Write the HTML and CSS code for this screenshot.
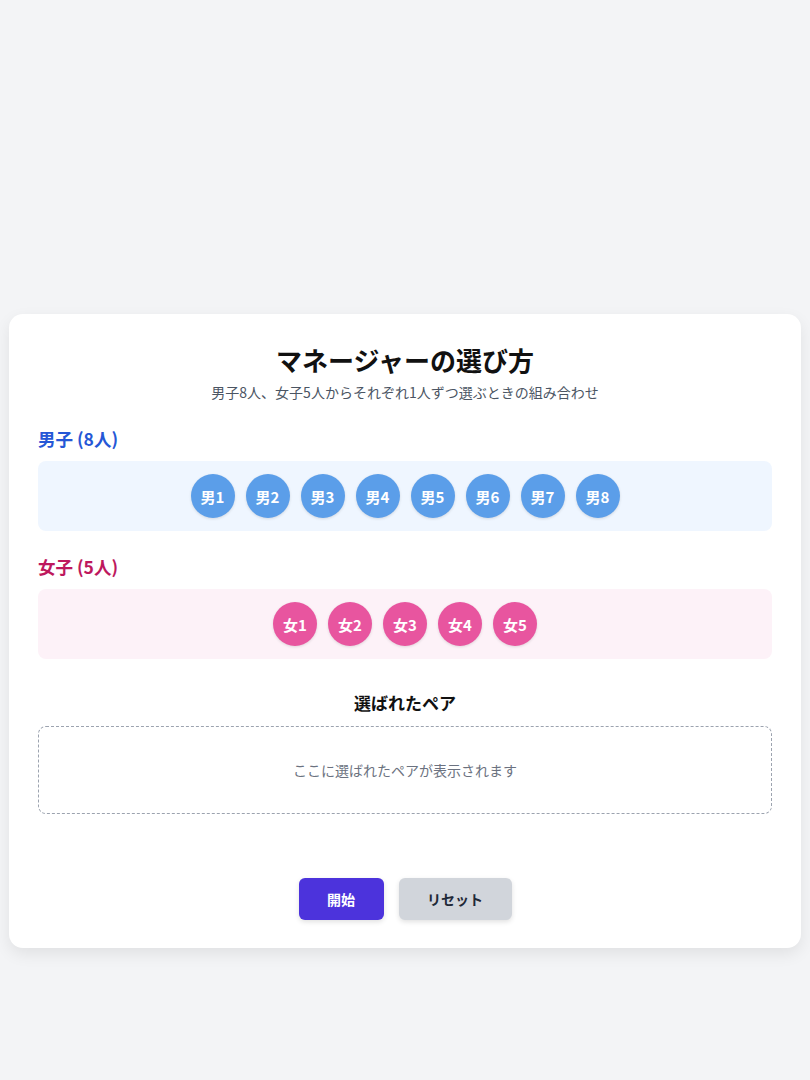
FILE: index.html
```html
<!DOCTYPE html>
<html lang="ja">
<head>
    <meta charset="UTF-8">
    <meta name="viewport" content="width=device-width, initial-scale=1.0">
    <title>マネージャーの選び方</title>
    <link rel="stylesheet" href="styles.css">
</head>
<body>
    <main class="card">
        <h1 class="title">マネージャーの選び方</h1>
        <p class="subtitle">男子8人、女子5人からそれぞれ1人ずつ選ぶときの組み合わせ</p>

        <section class="group">
            <h2 class="group-label boys">男子 (8人)</h2>
            <div class="pool boys-pool">
                <span class="person boy">男1</span>
                <span class="person boy">男2</span>
                <span class="person boy">男3</span>
                <span class="person boy">男4</span>
                <span class="person boy">男5</span>
                <span class="person boy">男6</span>
                <span class="person boy">男7</span>
                <span class="person boy">男8</span>
            </div>
        </section>

        <section class="group">
            <h2 class="group-label girls">女子 (5人)</h2>
            <div class="pool girls-pool">
                <span class="person girl">女1</span>
                <span class="person girl">女2</span>
                <span class="person girl">女3</span>
                <span class="person girl">女4</span>
                <span class="person girl">女5</span>
            </div>
        </section>

        <section class="result">
            <h3 class="result-title">選ばれたペア</h3>
            <div class="result-box">
                <span class="placeholder">ここに選ばれたペアが表示されます</span>
            </div>
        </section>

        <div class="actions">
            <button class="btn btn-start" type="button">開始</button>
            <button class="btn btn-reset" type="button">リセット</button>
        </div>
    </main>
</body>
</html>
```

FILE: styles.css
```css
body {
    font-family: "Noto Sans CJK JP", "Noto Sans", sans-serif;
    background-color: #f3f4f6;
    margin: 0;
    padding: 314px 9px 132px;
    color: #111827;
}

.card {
    background-color: #fff;
    border-radius: 14px;
    box-shadow: 0 6px 16px rgba(0, 0, 0, 0.08);
    padding: 26px 29px 28px;
}

.title {
    margin: 0;
    font-size: 26px;
    line-height: 40px;
    font-weight: 700;
    text-align: center;
    color: #111;
}

.subtitle {
    margin: 2px 0 0;
    font-size: 14px;
    line-height: 20px;
    color: #4b5563;
    text-align: center;
}

.group {
    margin-top: 25px;
}

.group + .group {
    margin-top: 24px;
}

.group-label {
    margin: 0 0 10px;
    font-size: 17.5px;
    line-height: 24px;
    font-weight: 600;
}

.group-label.boys {
    color: #2557d6;
}

.group-label.girls {
    color: #be185d;
}

.pool {
    display: flex;
    justify-content: center;
    align-items: center;
    gap: 11px;
    height: 70px;
    border-radius: 8px;
}

.boys-pool {
    background-color: #eff6ff;
}

.girls-pool {
    background-color: #fdf2f8;
}

.person {
    display: flex;
    align-items: center;
    justify-content: center;
    width: 44px;
    height: 44px;
    border-radius: 50%;
    color: #fff;
    font-size: 15px;
    font-weight: 700;
    box-shadow: 0 1px 3px rgba(0, 0, 0, 0.12);
}

.boy {
    background-color: #5b9ee9;
}

.girl {
    background-color: #e8559f;
}

.result {
    margin-top: 31px;
}

.result-title {
    margin: 0 0 10px;
    font-size: 17px;
    line-height: 26px;
    font-weight: 600;
    text-align: center;
    color: #111;
}

.result-box {
    display: flex;
    align-items: center;
    justify-content: center;
    height: 86px;
    border: 1px dashed #9ca3af;
    border-radius: 8px;
}

.placeholder {
    font-size: 14px;
    color: #6b7280;
}

.actions {
    display: flex;
    justify-content: center;
    gap: 15px;
    margin-top: 64px;
}

.btn {
    height: 42px;
    border: none;
    border-radius: 6px;
    font-family: inherit;
    font-size: 14px;
    font-weight: 700;
    cursor: pointer;
    box-shadow: 0 2px 5px rgba(0, 0, 0, 0.12);
}

.btn-start {
    width: 85px;
    background-color: #4c33dc;
    color: #fff;
}

.btn-reset {
    width: 113px;
    background-color: #d1d5db;
    color: #1f2937;
}
```
